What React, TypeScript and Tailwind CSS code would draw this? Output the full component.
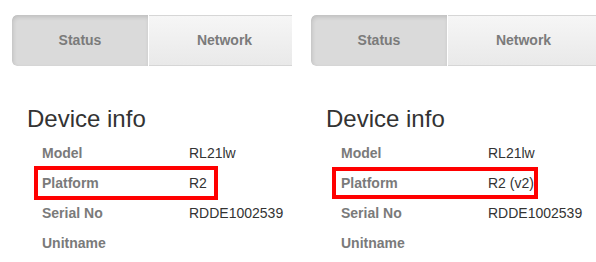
import React from "react";

type Row = { label: string; value: string };

function Panel({ clipWidth, rows, box }: { clipWidth: string; rows: Row[]; box: React.ReactNode }) {
  return (
    <div className="relative w-[299px] shrink-0 pl-[12px] pt-[15px]">
      <div className={`${clipWidth} overflow-hidden rounded-l-[5px]`}>
        <div className="flex h-[51px] w-[288px]">
          <div className="flex w-[136px] shrink-0 items-center justify-center rounded-l-[5px] bg-[#dadada] text-[14px] font-bold text-[#7b7b7b] shadow-[inset_1px_2px_4px_rgba(0,0,0,0.13)]">
            Status
          </div>
          <div className="w-px shrink-0 bg-white" />
          <div className="flex flex-1 items-center justify-center border-t border-b border-[#d6d6d6] bg-gradient-to-b from-[#f6f6f6] to-[#e9e9e9] text-[14px] font-bold text-[#7b7b7b]">
            Network
          </div>
        </div>
      </div>
      <div className="mt-[39px] pl-[14px]">
        <h2 className="pl-[1px] text-[24px] leading-[28px] text-[#333333]">Device info</h2>
        <div className="mt-[5px] flex flex-col">
          {rows.map((r) => (
            <div key={r.label} className="flex h-[30px] items-center text-[14px] leading-[30px]">
              <div className="w-[163px] shrink-0 pl-[16px] font-bold text-[#7a7a7a]">{r.label}</div>
              <div className="text-[#333333]">{r.value}</div>
            </div>
          ))}
        </div>
      </div>
      {box}
    </div>
  );
}

export default function App() {
  const left: Row[] = [
    { label: "Model", value: "RL21lw" },
    { label: "Platform", value: "R2" },
    { label: "Serial No", value: "RDDE1002539" },
    { label: "Unitname", value: "" },
  ];
  const right: Row[] = [
    { label: "Model", value: "RL21lw" },
    { label: "Platform", value: "R2 (v2)" },
    { label: "Serial No", value: "RDDE1002539" },
    { label: "Unitname", value: "" },
  ];
  return (
    <div
      className="flex h-[262px] w-[596px] overflow-hidden bg-white"
      style={{ fontFamily: '"Liberation Sans", Arial, sans-serif' }}
    >
      <Panel
        clipWidth="w-[280px]"
        rows={left}
        box={<div className="absolute left-[34px] top-[166px] h-[34px] w-[184px] border-[4px] border-[#ff0000]" />}
      />
      <Panel
        clipWidth="w-[288px]"
        rows={right}
        box={<div className="absolute left-[33px] top-[167px] h-[32px] w-[206px] border-[4px] border-[#ff0000]" />}
      />
    </div>
  );
}
